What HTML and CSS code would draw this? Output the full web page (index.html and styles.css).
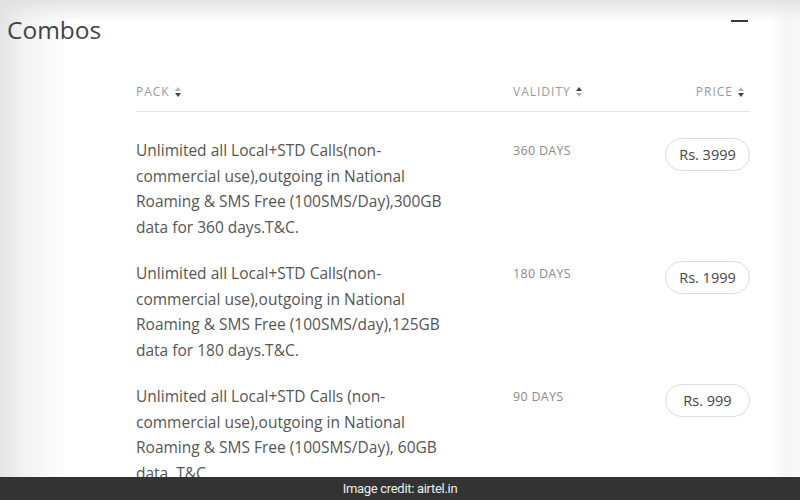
FILE: index.html
```html
<!DOCTYPE html>
<html>
<head>
<meta charset="utf-8">
<link rel="stylesheet" href="styles.css">
</head>
<body>
<div class="page">
  <main class="panel">
    <header class="panel-head">
      <h1 class="title">Combos</h1>
      <span class="collapse" aria-label="collapse"></span>
    </header>
    <section class="plans">
      <div class="row thead">
        <div class="th">PACK <svg class="sort" viewBox="0 0 6 10" width="6" height="10"><path d="M3 0L6 4H0z" fill="#b5b5b5"/><path d="M3 10L6 6H0z" fill="#444"/></svg></div>
        <div class="th">VALIDITY <svg class="sort" viewBox="0 0 6 10" width="6" height="10"><path d="M3 0L6 4H0z" fill="#444"/><path d="M3 10L6 6H0z" fill="#b5b5b5"/></svg></div>
        <div class="th th-price">PRICE <svg class="sort" viewBox="0 0 6 10" width="6" height="10"><path d="M3 0L6 4H0z" fill="#b5b5b5"/><path d="M3 10L6 6H0z" fill="#444"/></svg></div>
      </div>
      <div class="row plan">
        <div class="desc">Unlimited all Local+STD Calls(non-commercial use),outgoing in National Roaming &amp; SMS Free (100SMS/Day),300GB data for 360 days.T&amp;C.</div>
        <div class="validity">360 DAYS</div>
        <div class="price"><span class="pill">Rs. 3999</span></div>
      </div>
      <div class="row plan">
        <div class="desc">Unlimited all Local+STD Calls(non-commercial use),outgoing in National Roaming &amp; SMS Free (100SMS/day),125GB data for 180 days.T&amp;C.</div>
        <div class="validity">180 DAYS</div>
        <div class="price"><span class="pill">Rs. 1999</span></div>
      </div>
      <div class="row plan">
        <div class="desc">Unlimited all Local+STD Calls (non-commercial use),outgoing in National Roaming &amp; SMS Free (100SMS/Day), 60GB data, T&amp;C.</div>
        <div class="validity">90 DAYS</div>
        <div class="price"><span class="pill">Rs. 999</span></div>
      </div>
    </section>
  </main>
  <footer class="credit">Image credit: airtel.in</footer>
</div>
</body>
</html>
```
FILE: styles.css
```css
* { box-sizing: border-box; }
html, body { margin: 0; padding: 0; }
body {
  width: 800px;
  height: 500px;
  overflow: hidden;
  font-family: "Open Sans", Lato, sans-serif;
  color: #555;
}
.page {
  display: flex;
  flex-direction: column;
  height: 500px;
}
.panel {
  flex: 0 0 477px;
  overflow: hidden;
  background:
    linear-gradient(to bottom, rgba(225,225,225,0.9) 0, rgba(255,255,255,0) 22px),
    linear-gradient(to right, #e4e4e4 0, #f3f3f3 25px, #fff 70px, #fff 770px, #f6f6f6 786px, #fafafa 800px);
}
.panel-head {
  display: flex;
  justify-content: space-between;
  align-items: flex-start;
  padding: 14px 52px 0 7px;
  height: 74px;
}
.title {
  margin: 0;
  font-weight: 400;
  font-size: 24.5px;
  line-height: 32px;
  color: #444;
}
.collapse {
  width: 17px;
  height: 2px;
  margin-top: 6px;
  background: #3a3a3a;
}
.plans {
  margin-left: 136px;
  width: 614px;
}
.row {
  display: grid;
  grid-template-columns: 377px 1fr auto;
  align-items: start;
}
.thead {
  height: 38px;
  align-items: center;
  border-bottom: 1px solid #e3e3e3;
  padding-bottom: 2px;
}
.th {
  font-size: 12px;
  letter-spacing: 1px;
  color: #9a9a9a;
  display: flex;
  align-items: center;
  gap: 5px;
}
.th-price { justify-content: flex-end; padding-right: 6px; }
.sort { display: block; }
.plan { padding-top: 21px; }
.thead + .plan { padding-top: 26px; }
.desc {
  font-size: 15.5px;
  line-height: 25.5px;
  color: #555;
  padding-right: 50px;
}
.validity {
  font-size: 12.5px;
  letter-spacing: 0.3px;
  color: #8a8a8a;
  line-height: 26px;
}
.price { display: flex; justify-content: flex-end; }
.pill {
  display: inline-flex;
  align-items: center;
  justify-content: center;
  height: 33px;
  min-width: 85px;
  padding: 0 12px;
  border: 1px solid #dcdcdc;
  border-radius: 17px;
  font-size: 14.5px;
  color: #444;
  background: #fff;
}
.credit {
  flex: 0 0 23px;
  background: #333;
  color: #eee;
  font-family: Roboto, sans-serif;
  font-size: 13px;
  letter-spacing: -0.3px;
  display: flex;
  align-items: center;
  justify-content: center;
}
```
